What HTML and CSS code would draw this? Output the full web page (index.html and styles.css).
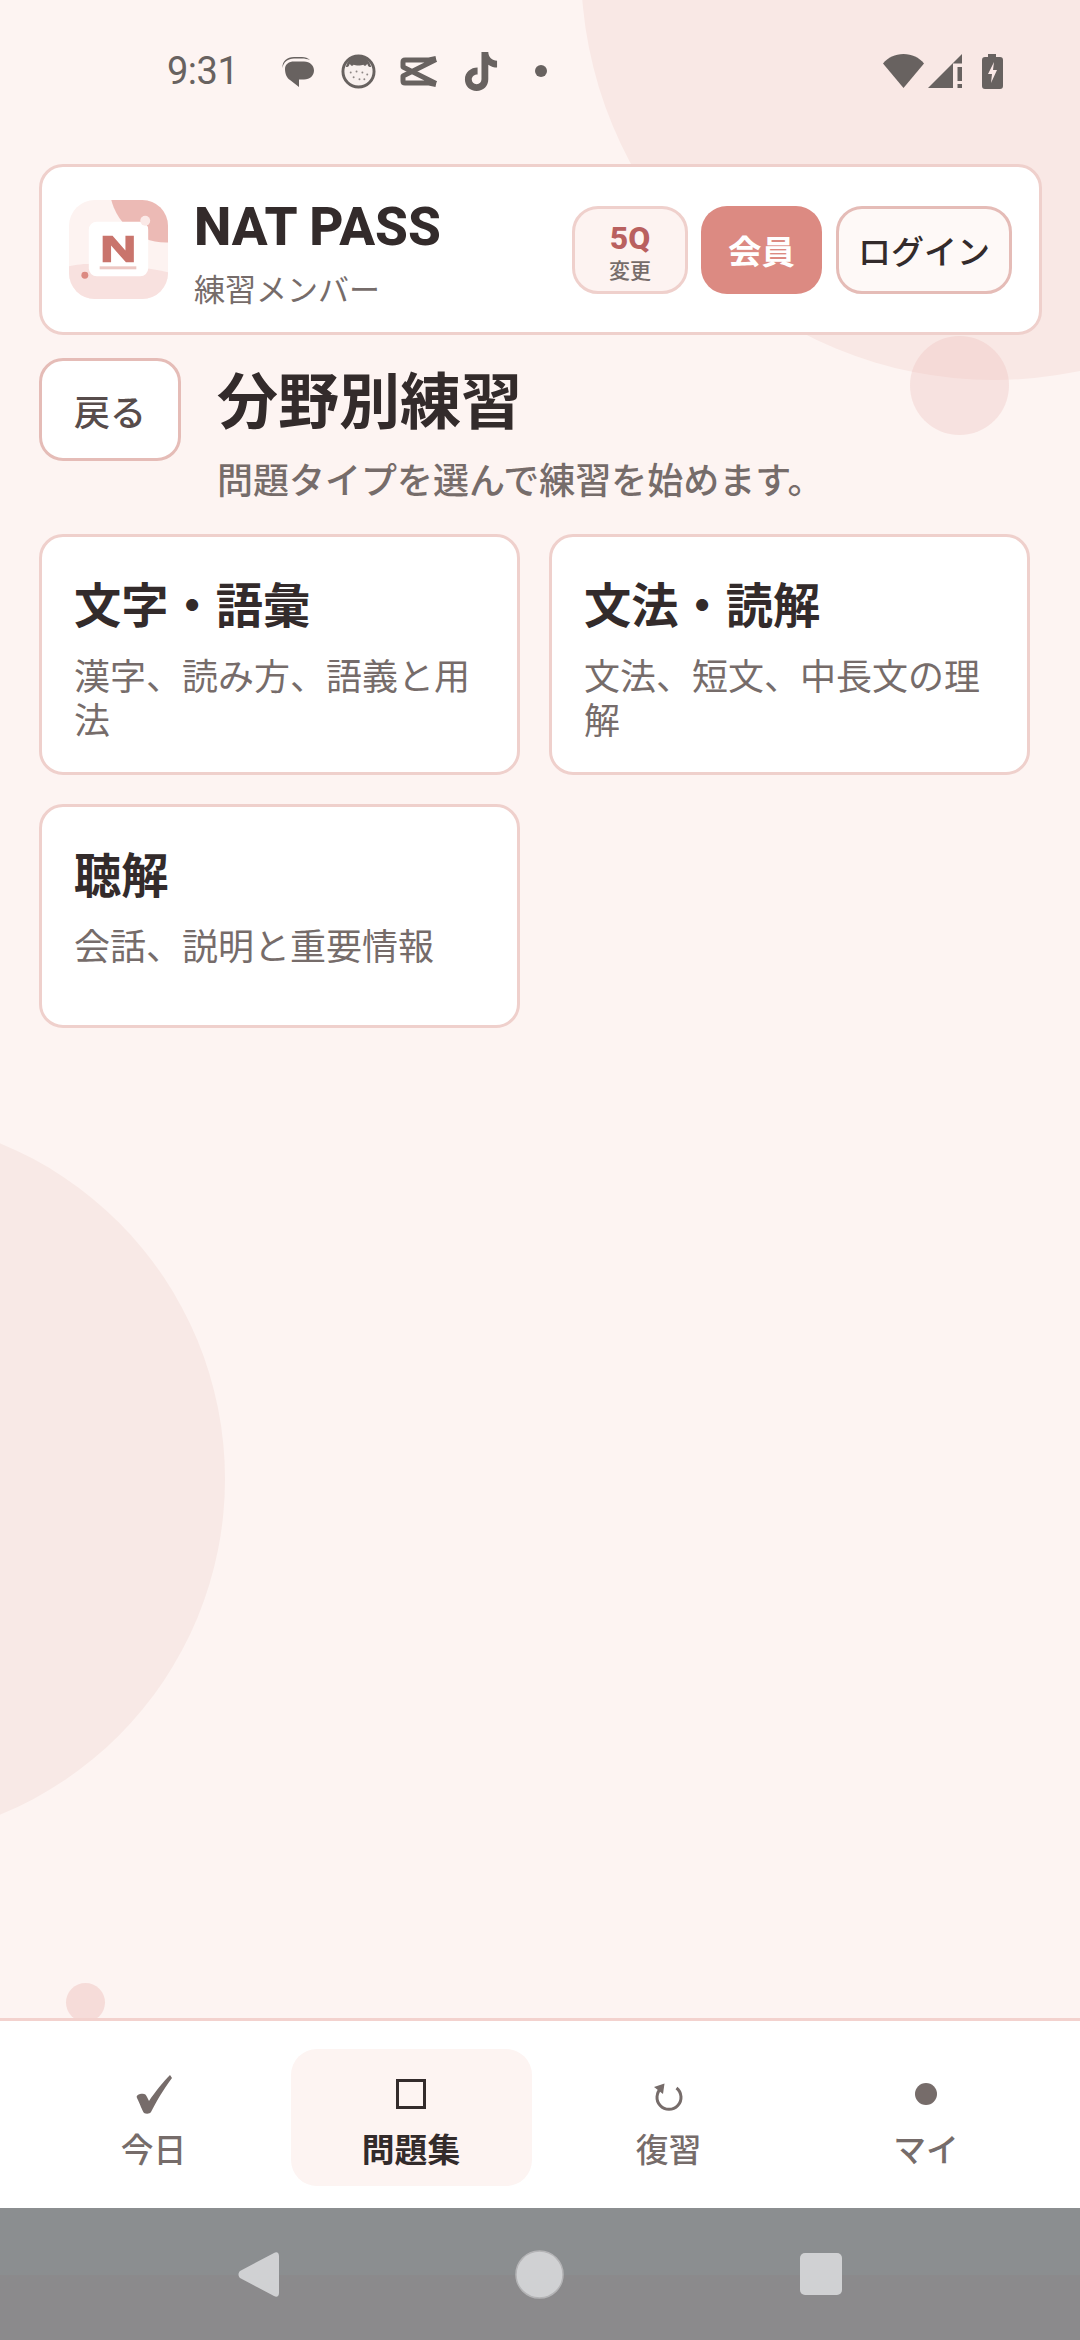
FILE: index.html
```html
<!DOCTYPE html>
<html lang="ja">
<head>
<meta charset="utf-8">
<title>NAT PASS</title>
<link rel="stylesheet" href="styles.css">
</head>
<body>
<div class="screen">
  <div class="deco deco-top"></div>
  <div class="deco deco-dot"></div>
  <div class="deco deco-left"></div>
  <div class="deco deco-small"></div>

  <div class="status">
    <span class="time">9:31</span>
    <div class="notifs">
      <svg class="bubble" width="33" height="31" viewBox="0 0 33 31"><path d="M1.500 12C1 5 6 1 13 1h8c3 0 6 1 8 3-3-1-5-1.500-8-1.500h-8C7 2.500 2.500 6 1.500 12z" fill="#686260"/><path d="M4 13C4 8 8 5.500 13 5.500h10c6 0 10 4 10 9s-4 9-10 9h-5v7.500L9 24C6 22 4 18 4 13z" fill="#686260"/></svg>
      <svg width="35" height="35" viewBox="0 0 36 36"><circle cx="18" cy="18" r="16" fill="#f8f0ee" stroke="#686260" stroke-width="3"/><path d="M5 13C7 6 12 2 18 2s11 4 13 11c-2 1-3 0-4-3-1 2-3 3-4 1-2 1-8 1-10 0-1 2-3 1-4-1-1 3-2 4-4 3z" fill="#686260"/><g fill="#8d8785"><circle cx="10" cy="19" r="1"/><circle cx="16" cy="18" r="1"/><circle cx="22" cy="19" r="1"/><circle cx="27" cy="21" r="1"/><circle cx="13" cy="24" r="1"/><circle cx="19" cy="26" r="1"/><circle cx="24" cy="26" r="1"/></g></svg>
      <svg width="38" height="31" viewBox="0 0 38 31"><path d="M36 3.500 3 20v5q0 2 2 2h24l7 1.500M36 27.500 3 11V6q0-2 2-2h24l7-1.500" fill="none" stroke="#686260" stroke-width="5" stroke-linejoin="round"/></svg>
      <svg width="37" height="41" viewBox="0 0 38 42"><path d="M20 1h7c0 5 4 9 9 9v7c-3 0-6-1-9-3v15c0 7-5 12-12 12S3 36 3 29s6-12 13-12v7c-3 0-6 2-6 5s2 5 5 5 5-2 5-5z" fill="#686260"/></svg>
      <span class="mini-dot"></span>
    </div>
    <div class="sys">
      <svg width="41" height="34" viewBox="0 0 41 34"><path d="M0 9.500C5 3.500 12 0 20.500 0s15.500 3.500 20.500 9.500L20.500 34z" fill="#686260"/></svg>
      <svg width="34" height="34" viewBox="0 0 34 34"><path d="M0 34 34 0v9.500h-9V34z" fill="#686260"/><path d="M29.500 13H34v14h-4.500zM29.500 30H34v4h-4.500z" fill="#686260"/></svg>
      <svg class="batt" width="21" height="35" viewBox="0 0 21 35"><path d="M6 0h8v3h4a3 3 0 0 1 3 3v26a3 3 0 0 1-3 3H3a3 3 0 0 1-3-3V6a3 3 0 0 1 3-3h3z" fill="#686260"/><path d="M12 8 6 20h4l-1 9 6-13h-4z" fill="#fbe9e7"/></svg>
    </div>
  </div>

  <header class="topcard">
    <div class="brand">
      <svg class="logo" width="99" height="99" viewBox="0 0 100 100">
        <defs><clipPath id="lc"><rect width="100" height="100" rx="26"/></clipPath></defs>
        <g clip-path="url(#lc)">
          <rect width="100" height="100" fill="#fdf3f1"/>
          <circle cx="98" cy="-14" r="57" fill="#ecbab5"/>
          <path d="M0 67C20 61 70 66 100 73v27H0z" fill="#f8e1df"/>
          <rect x="20" y="22" width="60" height="55" rx="8" fill="#fff"/>
          <circle cx="77" cy="21" r="5" fill="#fbe9e7"/>
          <circle cx="16" cy="76" r="3.500" fill="#dc8a82"/>
          <path d="M34 36h10l13 15V36h8.500v27h-8L42.500 46v17H34z" fill="#c9746c"/>
          <rect x="31" y="67" width="37" height="3" fill="#ecc7c3"/>
        </g>
      </svg>
      <div class="brand-text">
        <div class="brand-name">NAT PASS</div>
        <div class="brand-sub">練習メンバー</div>
      </div>
    </div>
    <div class="actions">
      <button class="btn level"><span class="lv">5Q</span><span class="chg">変更</span></button>
      <button class="btn member">会員</button>
      <button class="btn login">ログイン</button>
    </div>
  </header>

  <section class="heading">
    <button class="back">戻る</button>
    <div class="heading-text">
      <h1>分野別練習</h1>
      <p>問題タイプを選んで練習を始めます。</p>
    </div>
  </section>

  <section class="grid">
    <article class="tile"><h2>文字・語彙</h2><p>漢字、読み方、語義と用法</p></article>
    <article class="tile"><h2>文法・読解</h2><p>文法、短文、中長文の理解</p></article>
    <article class="tile"><h2>聴解</h2><p>会話、説明と重要情報</p></article>
  </section>

  <div class="spacer"></div>

  <nav class="tabs">
    <div class="tab"><span class="ico"><svg width="36" height="39" viewBox="0 0 36 39"><path d="M34 0l2 3C27 15 20 27 15 37c-1 2-5 2-7 1-2-3-4-9-7-15-1-2 0-3 3-4 4-1 6 0 7 3l2 4C19 17 27 7 34 0z" fill="#766c6a"/></svg></span><span class="lab">今日</span></div>
    <div class="tab active"><span class="ico"><svg width="30" height="30" viewBox="0 0 30 30"><rect x="1.500" y="1.500" width="27" height="27" fill="none" stroke="#332b2b" stroke-width="3"/></svg></span><span class="lab">問題集</span></div>
    <div class="tab"><span class="ico"><svg class="reload" width="29" height="28" viewBox="0 0 29 28"><path d="M7.500 5A12 12 0 1 0 22.500 5" fill="none" stroke="#766c6a" stroke-width="3"/><path d="M0 4 10.500.500 9 11z" fill="#766c6a"/></svg></span><span class="lab">復習</span></div>
    <div class="tab"><span class="ico"><svg width="22" height="22" viewBox="0 0 22 22"><circle cx="11" cy="11" r="11" fill="#766c6a"/></svg></span><span class="lab">マイ</span></div>
  </nav>

  <div class="sysnav">
    <svg width="41" height="45" viewBox="0 0 41 45"><path d="M36 1c3-2 5 0 5 3v37c0 3-2 5-5 3L2 26c-2-2-2-5 0-7z" fill="#d0d1d3"/></svg>
    <svg width="49" height="49" viewBox="0 0 50 50"><circle cx="25" cy="25" r="24" fill="#d0d1d3" stroke="#b4b4b6" stroke-width="1.500"/></svg>
    <svg width="42" height="42" viewBox="0 0 42 42"><rect width="42" height="42" rx="5" fill="#d0d1d3"/></svg>
  </div>
</div>
</body>
</html>
```
FILE: styles.css
```css
* { box-sizing: border-box; }
html, body { margin: 0; padding: 0; }
body { font-family: "Noto Sans CJK JP", Roboto, sans-serif; color: #332b2b; }
.screen { position: relative; width: 1080px; height: 2340px; background: #fdf4f2; overflow: hidden; display: flex; flex-direction: column; }
.deco { position: absolute; border-radius: 50%; }
.deco-top { left: 581px; top: -446px; width: 826px; height: 826px; background: #f9e8e5; }
.deco-dot { left: 910px; top: 336px; width: 99px; height: 99px; background: rgba(236, 186, 181, .3); }
.deco-left { left: -501px; top: 1116px; width: 726px; height: 726px; background: #f8e9e6; }
.deco-small { left: 66px; top: 1983px; width: 39px; height: 39px; background: #f6dcd9; }

.status { position: relative; height: 164px; flex: none; display: flex; align-items: flex-start; padding: 48px 77px 0 167px; color: #686260; }
.time { font: 400 38px/46px Roboto, sans-serif; width: 71px; letter-spacing: -.5px; flex: none; }
.notifs { display: flex; align-items: center; gap: 24px; height: 46px; margin-left: 43px; }
.notifs svg { display: block; flex: none; }
.bubble { margin-right: 3px; }
.mini-dot { width: 12px; height: 12px; border-radius: 50%; background: #686260; margin-left: 12px; }
.sys { margin-left: auto; display: flex; align-items: center; gap: 4px; height: 46px; }
.sys svg { display: block; flex: none; }
.batt { margin-left: 16px; }

.topcard { position: relative; flex: none; margin: 0 38px 0 39px; height: 171px; background: #fff; border: 3px solid #efd0cc; border-radius: 24px; display: flex; align-items: center; justify-content: space-between; padding: 0 27px; }
.brand { display: flex; align-items: center; gap: 26px; }
.logo { display: block; flex: none; }
.brand-name { font: 800 53px/62px Roboto, sans-serif; color: #332b2b; margin-top: 6px; }
.brand-sub { font-size: 31px; line-height: 44px; color: #766c6a; margin-top: 8px; }
.actions { display: flex; align-items: center; gap: 13px; }
.btn { height: 88px; border-radius: 26px; font-family: inherit; padding: 0; display: flex; flex-direction: column; align-items: center; justify-content: center; }
.level { width: 116px; background: #fdf3f1; border: 3px solid #efd0cc; padding-top: 4px; }
.lv { font: 800 32px/34px Roboto, sans-serif; color: #b9605f; }
.chg { font-size: 21px; line-height: 28px; font-weight: 500; color: #766c6a; }
.member { width: 121px; background: #dc8a82; border: 0; color: #fff; font-size: 33.500px; font-weight: 700; }
.login { width: 176px; margin-left: 1px; background: #fef9f7; border: 3px solid #e5bcb7; color: #332b2b; font-size: 33px; font-weight: 500; }

.heading { position: relative; flex: none; display: flex; align-items: flex-start; margin: 23px 39px 0; gap: 36px; }
.back { width: 142px; height: 103px; background: #fff; border: 3px solid #e5bcb7; border-radius: 24px; font-family: inherit; font-size: 36px; font-weight: 500; color: #574c4b; padding: 0; flex: none; }
.heading-text { margin-top: -2px; }
h1 { margin: 0; font-size: 61px; line-height: 84px; font-weight: 700; color: #332b2b; }
.heading-text p { margin: 14px 0 0; font-size: 36px; line-height: 48px; font-weight: 500; color: #766c6a; }

.grid { position: relative; flex: none; display: grid; grid-template-columns: 481px 481px; gap: 29px; margin: 32px 0 0 39px; }
.tile { background: #fff; border: 3px solid #efd0cc; border-radius: 24px; padding: 32px 32px 32px; min-height: 224px; }
.tile h2 { margin: 0; font-size: 47.250px; line-height: 68px; font-weight: 700; color: #332b2b; }
.tile p { margin: 15px 0 0; font-size: 36px; line-height: 44px; color: #766c6a; }

.spacer { flex: 1; }
.tabs { position: relative; flex: none; height: 190px; background: #fff; border-top: 3px solid #f3d2ce; display: flex; gap: 16.500px; padding: 28px 33.500px 22px 33px; }
.tab { flex: 1; display: flex; flex-direction: column; align-items: center; border-radius: 26px; padding-top: 15px; }
.tab.active { background: #fdf4f2; }
.ico { height: 60px; display: flex; align-items: center; justify-content: center; }
.ico svg { display: block; }
.reload { margin-top: 5px; }
.lab { font-size: 32.800px; line-height: 48px; font-weight: 500; color: #766c6a; }
.active .lab { color: #332b2b; font-weight: 700; }

.sysnav { flex: none; height: 132px; background: linear-gradient(#8b8e90 0, #8b8e90 67px, #8b8a8c 67px); display: flex; align-items: center; justify-content: center; gap: 236px; }
```
